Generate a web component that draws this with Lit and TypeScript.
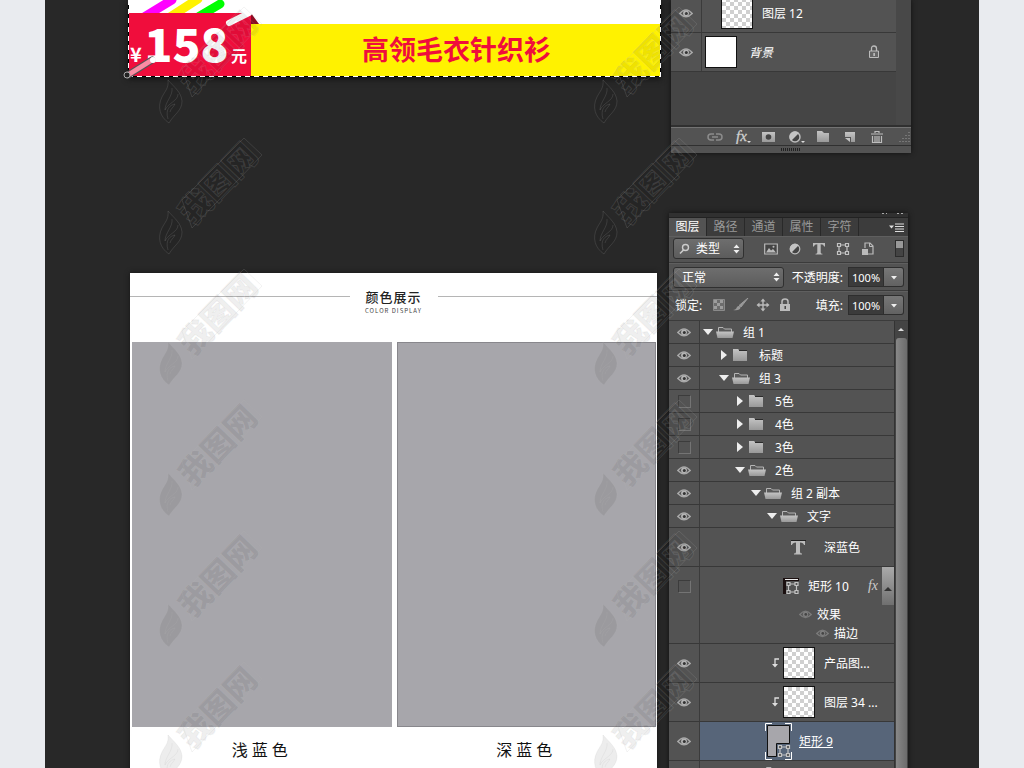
import { LitElement, html, svg, css, nothing } from "lit";
import { customElement, property } from "lit/decorators.js";

type Kind = "open" | "closed" | "text" | "shape" | "thumb" | "crop" | "white";
interface Layer {
  name: string;
  kind: Kind;
  depth: number;
  visible: boolean;
  tall?: boolean;
  clipped?: boolean;
  fx?: boolean;
  active?: boolean;
  locked?: boolean;
  background?: boolean;
}

const INDENT = 16;

const eye = svg`<path d="M.8 5.5Q7 -1.8 13.2 5.5Q7 12 .8 5.5Z" fill="#555" stroke="#a9a9a9" stroke-width="1.4"/><circle cx="7" cy="5.2" r="2.9" fill="#b4b4b4"/><circle cx="7.3" cy="5.4" r="1.5" fill="#333"/>`;
const lock = svg`<path d="M3 6V3.5Q3 1 6 1T9 3.5V6" fill="none" stroke="currentColor" stroke-width="1.5"/><path d="M1 6H11V13H1Z" fill="currentColor"/><path d="M5.5 8h1.4v3H5.5z" fill="#3c3c3c"/>`;
const lockOutline = svg`<path d="M3.500 6V3.500Q3.500 1 6 1T8.500 3.500V6" fill="none" stroke="#bbb" stroke-width="1.300"/><path d="M1.500 6H10.500V12.500H1.500Z" fill="#666" stroke="#bbb"/><path d="M5.500 8h1.200v3H5.500z" fill="#ddd"/>`;
const folderClosed = svg`<path d="M0 2V0H5L7 2H14V12H0Z" fill="url(#metal)"/><path d="M6 1.5H14" stroke="#2b2b2b"/>`;
const folderOpen = svg`<path d="M2.5 6V1.5H7L8.5 3H15.5V6" fill="#5a5a5a" stroke="#b5b5b5"/><path d="M0 5.5H18L16.5 12H1.5Z" fill="url(#metal)"/>`;
const metal = svg`<defs><linearGradient id="metal" x1="0" y1="0" x2="0" y2="1"><stop offset="0" stop-color="#c4c4c4"/><stop offset="1" stop-color="#999"/></linearGradient></defs>`;
const bounds = svg`<g fill="none" stroke="#c3c3c3" stroke-width="1.2"><path d="M4 3H10M4 11H10M3 4V10M11 4V10"/><path d="M1.5 1.5h3v3h-3zM9.5 1.5h3v3h-3zM1.5 9.5h3v3h-3zM9.5 9.5h3v3h-3z" fill="#555"/></g>`;
const glyphT = svg`<path d="M0 0H14V4H13Q12.500 1.500 9 1.500V11Q9 12.500 11 12.500V13.500H3V12.500Q5 12.500 5 11V1.500Q1.500 1.500 1 4H0Z" fill="#bcbcbc"/>`;

@customElement("layer-row")
export class LayerRow extends LitElement {
  @property({ attribute: false }) layer!: Layer;

  static styles = css`
    :host { display: block; }
    .row { display: grid; grid-template-columns: 31px 1fr; min-height: 22px; border-bottom: 1px solid #383838; background: #535353; color: #fff; }
    .tall { min-height: 38px; }
    .vis { display: grid; place-items: center; border-right: 1px solid #3b3b3b; }
    .vis > * { grid-area: 1 / 1; }
    .vis input { appearance: none; margin: 0; box-sizing: border-box; width: 13px; height: 13px; border: 1px solid; border-color: #3c3c3c #747474 #747474 #3c3c3c; }
    .vis input:checked { border-color: transparent; }
    .body { display: flex; align-items: center; min-width: 0; }
    .active { background: #576579; }
    .tri { width: 10px; height: 10px; margin: 0 3px; }
    .folder { width: 27px; height: 12px; }
    .kind { display: flex; justify-content: center; align-items: center; width: 32px; margin-right: 10px; }
    .shape { margin-right: 8px; }
    .clip { width: 8px; height: 10px; margin-right: 3px; }
    .thumb { box-sizing: border-box; width: 32px; height: 32px; border: 1px solid #111; background: #fff; margin-right: 9px; }
    .checker { background: repeating-conic-gradient(#cfcfcf 0 25%, #fff 0 50%) 0 0 / 8px 8px; }
    .crop { width: 27px; height: 37px; margin-right: 7px; }
    .name { flex: 1; white-space: nowrap; padding-top: 2px; font-size: 12px; line-height: 16px; }
    .active .name { text-decoration: underline; }
    .background { font-style: italic; margin-left: 3px; }
    .locked { width: 12px; height: 14px; margin-right: 16px; }
    .fx { font: italic 14px "Liberation Serif", serif; color: #ccc; margin-right: 4px; }
    .fold { align-self: stretch; width: 12px; border: 0; padding: 0; background: linear-gradient(#aaa, #707070); }
    .effects { display: grid; grid-column: 2; color: #fff; font-size: 12px; line-height: 19px; padding-left: 99px; }
    .effects div { display: flex; align-items: center; gap: 5px; }
    .effects div + div { padding-left: 17px; }
    .effects svg { opacity: 0.45; }
    .withfx { grid-template-rows: 38px 38px; background: linear-gradient(#3b3b3b, #3b3b3b) 30px 0 / 1px 100% no-repeat #535353; }
    .withfx .vis { border-right: 0; }
  `;

  private icon(l: Layer) {
    switch (l.kind) {
      case "open":
        return html`<svg class="tri" viewBox="0 0 10 10"><path d="M0 2H10L5 8Z" fill="#eee"/></svg>
          <svg class="folder" viewBox="0 0 27 12">${metal}${folderOpen}</svg>`;
      case "closed":
        return html`<svg class="tri" viewBox="0 0 10 10"><path d="M2 0V10L8 5Z" fill="#eee"/></svg>
          <svg class="folder" viewBox="-1 0 27 12">${metal}${folderClosed}</svg>`;
      case "text":
        return html`<span class="kind"><svg width="16" height="15" viewBox="-1 -1 16 15"><path d="M0 -.5H15" stroke="#222"/>${glyphT}</svg></span>`;
      case "shape":
        return html`<svg class="shape" width="17" height="17" viewBox="0 0 17 17"><path d="M0 0H16V3H3V16H0Z" fill="#1b1010"/><path d="M2 1.5H15" stroke="#eee"/><g transform="translate(2.500 3)">${bounds}</g></svg>`;
      case "crop":
        return html`<svg class="crop" viewBox="0 0 27 37"><path d="M.5 8V.5H7M20 .5H26.500V8M26.500 29V36.500H20M7 36.500H.5V29" fill="none" stroke="#fff"/><path d="M2.500 2.500H24.500V20.500H11.500V33.500H2.500Z" fill="#a7a6ab" stroke="#111"/><g transform="translate(12 21)">${bounds}</g></svg>`;
      case "thumb":
        return html`${l.clipped ? html`<svg class="clip" viewBox="0 0 8 10"><path d="M7 1H3V7" fill="none" stroke="#ddd" stroke-width="1.3"/><path d="M0 6H6L3 9.500Z" fill="#ddd"/></svg>` : nothing}<span class="thumb checker"></span>`;
      default:
        return html`<span class="thumb"></span>`;
    }
  }

  render() {
    const l = this.layer;
    const starts: Record<string, number> = { open: 0, closed: 0, text: 2, shape: 3, thumb: l.clipped ? -8 : 3, crop: 1, white: 3 };
    return html`<div class="row ${l.tall ? "tall" : ""} ${l.fx ? "withfx" : ""}">
      <label class="vis" aria-label=${l.name}>
        ${l.visible ? html`<svg width="14" height="11" viewBox="0 0 14 11">${eye}</svg>` : nothing}
        <input type="checkbox" .checked=${l.visible} />
      </label>
      <div class="body ${l.active ? "active" : ""}" style="padding-left:${l.depth * INDENT + starts[l.kind]}px">
        ${this.icon(l)}
        <span class="name ${l.background ? "background" : ""}">${l.name}</span>
        ${l.locked ? html`<svg class="locked" viewBox="0 0 12 14">${lockOutline}</svg>` : nothing}
        ${l.fx ? html`<span class="fx">fx</span><button class="fold" aria-label="折叠"><svg width="8" height="5" viewBox="0 0 8 5"><path d="M0 5H8L4 1Z" fill="#333"/></svg></button>` : nothing}
      </div>
      ${l.fx ? html`<div class="effects">
        <div><svg width="13" height="11" viewBox="0 0 14 11">${eye}</svg>效果</div>
        <div><svg width="13" height="11" viewBox="0 0 14 11">${eye}</svg>描边</div>
      </div>` : nothing}
    </div>`;
  }
}

const upper: Layer[] = [
  { name: "图层 12", kind: "thumb", depth: 1, visible: true, tall: true },
  { name: "背景", kind: "white", depth: 0, visible: true, tall: true, locked: true, background: true },
];

const lower: Layer[] = [
  { name: "组 1", kind: "open", depth: 0, visible: true },
  { name: "标题", kind: "closed", depth: 1, visible: true },
  { name: "组 3", kind: "open", depth: 1, visible: true },
  { name: "5色", kind: "closed", depth: 2, visible: false },
  { name: "4色", kind: "closed", depth: 2, visible: false },
  { name: "3色", kind: "closed", depth: 2, visible: false },
  { name: "2色", kind: "open", depth: 2, visible: true },
  { name: "组 2 副本", kind: "open", depth: 3, visible: true },
  { name: "文字", kind: "open", depth: 4, visible: true },
  { name: "深蓝色", kind: "text", depth: 5, visible: true, tall: true },
  { name: "矩形 10", kind: "shape", depth: 5, visible: false, tall: true, fx: true },
  { name: "产品图...", kind: "thumb", depth: 5, visible: true, tall: true, clipped: true },
  { name: "图层 34 ...", kind: "thumb", depth: 5, visible: true, tall: true, clipped: true },
  { name: "矩形 9", kind: "crop", depth: 4, visible: true, tall: true, active: true },
  { name: "", kind: "open", depth: 3, visible: true },
];

@customElement("layers-footer")
export class LayersFooter extends LitElement {
  static styles = css`
    :host { display: block; }
    .bar { display: flex; align-items: center; gap: 9px; height: 17px; padding-left: 35px; background: #535353; border-top: 1px solid #737373; border-bottom: 1px solid #303030; }
    button { display: grid; place-items: center; width: 18px; height: 17px; padding: 0; border: 0; background: none; color: #bbb; }
    .resize { margin-left: auto; }
    .grip { height: 7px; background: #535353; display: grid; place-items: center; }
  `;
  render() {
    const tool = (label: string, art: unknown) =>
      html`<button aria-label=${label}><svg width="18" height="14" viewBox="0 0 18 14">${metal}${art}</svg></button>`;
    return html`<div class="bar">
      ${tool("链接", svg`<g fill="none" stroke="#8c8c8c" stroke-width="1.500"><path d="M8 4H5Q2 4 2 7T5 10H8M10 4H13Q16 4 16 7T13 10H10M6 7H12"/></g>`)}
      ${tool("效果", svg`<text x="3" y="11" font-family="Liberation Serif, serif" font-style="italic" font-size="15" fill="#d0d0d0" stroke="#d0d0d0" stroke-width=".3">fx</text><path d="M14 11H18L16 13Z" fill="#ddd"/>`)}
      ${tool("蒙版", svg`<path d="M2 2H15V12H2Z" fill="url(#metal)"/><circle cx="8.500" cy="7" r="2.800" fill="#444"/>`)}
      ${tool("调整", svg`<circle cx="8" cy="7" r="5" fill="#444" stroke="#bbb" stroke-width="1.500"/><path d="M4 11A5.500 5.500 0 0 1 12 3Z" fill="#c4c4c4"/><path d="M14 11H18L16 13Z" fill="#ddd"/>`)}
      ${tool("新建组", svg`<path d="M3 3V1H8L10 3H15V12H3Z" fill="url(#metal)"/>`)}
      ${tool("新建图层", svg`<path d="M4 2H14V12H10V7H4Z" fill="url(#metal)"/><path d="M4 8H9V12Z" fill="#c4c4c4"/>`)}
      ${tool("删除", svg`<g fill="none" stroke="#bdbdbd" stroke-width="1.200"><path d="M3 4H15M7 3V1.500H11V3M4.500 6V12.500H13.500V6M7 6V12M9 6V12M11 6V12"/></g>`)}
      <svg class="resize" width="12" height="12" viewBox="0 0 12 12"><path d="M10 1V11M7 4V11M4 7V11M1 10V11" stroke="#999" stroke-dasharray="1 2"/></svg>
    </div>
    <div class="grip"><svg width="20" height="3" viewBox="0 0 20 3"><path d="M0 1.500H20" stroke="#222" stroke-width="3" stroke-dasharray="1 1"/></svg></div>`;
  }
}

@customElement("layers-controls")
export class LayersControls extends LitElement {
  static styles = css`
    :host { display: block; font-size: 12px; color: #fff; }
    .strip { height: 4px; border-bottom: 1px solid #222; background: #303030; display: flex; justify-content: flex-end; }
    .tabs { display: flex; height: 18px; background: #3c3c3c; }
    .tabs button { width: 38px; padding: 0; border: 0; border-right: 1px solid #292929; background: none; color: #999; font: inherit; line-height: 18px; }
    .tabs .on { background: #535353; color: #fff; }
    .tabs .menu { margin-left: auto; border: 0; width: 24px; display: grid; place-items: center; }
    .line { display: flex; align-items: center; box-sizing: border-box; height: 28px; padding: 0 4px; background: #535353; border-bottom: 1px solid #3b3b3b; border-top: 1px solid #5f5f5f; white-space: nowrap; }
    .filter { height: 27px; padding-bottom: 2px; }
    .locking { height: 30px; padding-bottom: 2px; }
    .pick { position: relative; display: flex; align-items: center; }
    .pick svg { pointer-events: none; position: absolute; }
    .search { left: 6px; }
    .spin { right: 4px; }
    select { appearance: none; box-sizing: border-box; height: 21px; margin: 0; border: 1px solid #303030; border-radius: 3px; background: linear-gradient(#6e6e6e, #5c5c5c); color: #fff; font: inherit; padding: 0 8px; }
    .kind { width: 71px; padding-left: 22px; }
    .blend { width: 111px; }
    .filters { display: flex; align-items: center; gap: 8px; margin-left: 19px; }
    .filters button, .locks button { display: grid; place-items: center; width: 16px; height: 16px; padding: 0; border: 0; background: none; }
    .switch { margin-left: auto; width: 9px; height: 17px; box-sizing: border-box; border: 1px solid #2c2c2c; background: linear-gradient(#999 0 7px, #444 7px); }
    .value { display: flex; align-items: center; gap: 5px; margin-left: auto; }
    .field { display: flex; }
    .field input { box-sizing: border-box; width: 36px; height: 20px; padding: 0 0 0 3px; border: 1px solid #2e2e2e; background: #3b3b3b; color: #fff; font: inherit; font-size: 11px; }
    .field button { width: 20px; height: 20px; display: grid; place-items: center; padding: 0; border: 1px solid #2e2e2e; border-left: 0; border-radius: 0 3px 3px 0; background: linear-gradient(#777, #626262); }
    .locks { display: flex; align-items: center; gap: 6px; margin-left: 9px; }
    .title { margin-left: 2px; }
  `;
  render() {
    const spin = html`<svg class="spin" width="7" height="10" viewBox="0 0 7 10"><path d="M.5 4H6.500L3.500 .5ZM.5 6H6.500L3.500 9.500Z" fill="#eee"/></svg>`;
    const field = (id: string, label: string) => html`<div class="value"><label for=${id}>${label}:</label><span class="field"><input id=${id} type="text" value="100%" /><button aria-label=${label}><svg width="8" height="5" viewBox="0 0 8 5"><path d="M1 1H7L4 4.500Z" fill="#eee"/></svg></button></span></div>`;
    return html`<div class="strip"><svg width="28" height="2" viewBox="0 0 28 2"><path d="M2 .5H7M17 .5H23" stroke="#aaa" stroke-dasharray="2 2"/></svg></div>
    <div class="tabs">
      ${["图层", "路径", "通道", "属性", "字符"].map((t, i) => html`<button class=${i ? "" : "on"}>${t}</button>`)}
      <button class="menu" aria-label="菜单"><svg width="15" height="9" viewBox="0 0 15 9"><path d="M0 2.500H5L2.500 5.500Z" fill="#ddd"/><path d="M6 1H15M6 3.500H15M6 6H15M6 8.500H15" stroke="#ddd"/></svg></button>
    </div>
    <div class="line filter">
      <span class="pick"><svg class="search" width="11" height="12" viewBox="0 0 11 12"><circle cx="6.500" cy="4.500" r="3" fill="none" stroke="#ccc" stroke-width="1.400"/><path d="M4.500 7L1 10.500" stroke="#ccc" stroke-width="1.600"/></svg><select class="kind" aria-label="筛选"><option>类型</option></select>${spin}</span>
      <span class="filters">
        <button aria-label="像素"><svg width="14" height="12" viewBox="0 0 14 12"><path d="M.7 1H13.300V11H.7Z" fill="#444" stroke="#bbb" stroke-width="1.200"/><path d="M2 9.500L5 5L7 7.500L9 6L12 9.500Z" fill="#bbb"/><circle cx="9.500" cy="3.800" r="1" fill="#bbb"/></svg></button>
        <button aria-label="调整"><svg width="12" height="12" viewBox="0 0 12 12"><circle cx="6" cy="6" r="4.800" fill="#444" stroke="#bbb" stroke-width="1.200"/><path d="M2.300 9.700A5.200 5.200 0 0 1 9.700 2.300Z" fill="#c4c4c4"/></svg></button>
        <button aria-label="文字"><svg width="12" height="12" viewBox="0 0 14 14">${glyphT}</svg></button>
        <button aria-label="形状"><svg width="14" height="14" viewBox="0 0 14 14">${bounds}</svg></button>
        <button aria-label="智能对象"><svg width="13" height="14" viewBox="0 0 13 14"><path d="M4 6V1H9L12 4V12H7" fill="none" stroke="#bbb" stroke-width="1.200"/><path d="M8.500 1V4.500H12" fill="none" stroke="#bbb"/><path d="M1 7H7V13H1Z" fill="#bbb"/></svg></button>
      </span>
      <span class="switch"></span>
    </div>
    <div class="line">
      <span class="pick"><select class="blend" aria-label="混合模式"><option>正常</option></select>${spin}</span>
      ${field("opacity", "不透明度")}
    </div>
    <div class="line locking">
      <span class="title">锁定:</span>
      <span class="locks">
        <button aria-label="透明像素"><svg width="12" height="12" viewBox="0 0 12 12"><path d="M.5 .5H11.500V11.500H.5Z" fill="#6d6d6d" stroke="#8a8a8a"/><path d="M1 1H4V4H1ZM7 1H10V4H7ZM4 4H7V7H4ZM1 7H4V10H1ZM7 7H10V10H7Z" fill="#9d9d9d"/></svg></button>
        <button aria-label="图像像素"><svg width="16" height="14" viewBox="0 0 16 14"><path d="M15 0L8 9L6 7.500Z" fill="#999" stroke="#999"/><path d="M0 12Q3 12 4 9Q6 7 7.500 9.500Q7 13 0 12Z" fill="#999"/></svg></button>
        <button aria-label="位置"><svg width="14" height="14" viewBox="0 0 14 14"><path d="M7 2V12M2 7H12" stroke="#bbb" stroke-width="1.400"/><path d="M4.500 3.500L7 .5L9.500 3.500ZM4.500 10.500L7 13.500L9.500 10.500ZM3.500 4.500L.5 7L3.500 9.500ZM10.500 4.500L13.500 7L10.500 9.500Z" fill="#bbb"/></svg></button>
        <button aria-label="全部"><svg width="12" height="14" viewBox="0 0 12 14" color="#bbb">${lock}</svg></button>
      </span>
      ${field("fill", "填充")}
    </div>`;
  }
}

@customElement("app-root")
export class AppRoot extends LitElement {
  static styles = css`
    :host { display: block; height: 100vh; overflow: hidden; background: #e9ebef; font-family: "Noto Sans", "Noto Sans CJK SC", sans-serif; }
    main { position: relative; box-sizing: border-box; min-height: 100%; margin: 0 45px; padding: 0 68px 0 83px; background: #282828; }
    .pair { display: grid; grid-template-columns: 1fr 240px; column-gap: 10px; align-items: start; }
    .pair + .pair { margin-top: 60px; }
    .panel { box-shadow: 0 0 5px #111; }
    .upper .layers { display: grid; grid-template-columns: 1fr 15px; background: #484848; border-bottom: 2px solid #303030; }
    .upper .list { margin-top: -6px; padding-bottom: 53px; background: #454545; }
    .lower { margin: 0 3px 0 -2px; background: #535353; }
    .lower .layers { display: grid; grid-template-columns: 1fr 14px; }
    .scroll { background: #444; border-left: 1px solid #333; display: flex; flex-direction: column; align-items: center; }
    .scroll svg { margin: 6px 0; }
    .handle { flex: 1; width: 11px; border-radius: 3px; background: linear-gradient(90deg, #888, #6c6c6c); }

    .poster { position: relative; background: #fff; padding: 24px 1px 1px; box-shadow: 0 2px 6px #111; }
    .banner { display: flex; box-sizing: border-box; margin-left: 122px; height: 52px; padding-bottom: 2px; align-items: center; background: #fff200; }
    h1 { margin: 0 0 0 111px; font: 700 27px/40px "Noto Sans CJK SC", sans-serif; color: #f00d3c; white-space: nowrap; }
    .price { position: absolute; left: 0; bottom: 1px; width: 123px; height: 63px; box-sizing: border-box; padding: 0 4px 0 2px; display: flex; align-items: baseline; justify-content: space-between; background: #f00d3c; color: #fff; font: 700 16px/58px "Noto Sans CJK SC", sans-serif; }
    .price .yen { font-size: 20px; }
    .price b { font-size: 46px; }
    .strokes { position: absolute; left: -6px; bottom: -4px; }
    .ants { position: absolute; inset: 0; background:
      repeating-linear-gradient(90deg, #fff 0 5px, #000 5px 9px) bottom / 100% 1px no-repeat,
      repeating-linear-gradient(#fff 0 5px, #000 5px 9px) left / 1px 100% no-repeat,
      repeating-linear-gradient(#fff 0 5px, #000 5px 9px) right / 1px 100% no-repeat; }

    .sheet { margin: 60px 4px 0 2px; background: #fff; color: #222; font-family: "Noto Sans CJK SC", sans-serif; box-shadow: 0 0 5px #151515; }
    header { display: grid; grid-template-columns: 1fr 88px 1fr; padding-top: 14px; height: 55px; }
    header hr { width: 100%; height: 1px; margin: 9px 0; border: 0; background: #b5b5b5; }
    h2 { margin: 0; font-size: 13px; line-height: 20px; font-weight: 500; letter-spacing: 1px; text-align: center; }
    header p { margin: 0; font: 6px/8px "Noto Sans CJK SC", sans-serif; letter-spacing: 1px; text-align: center; white-space: nowrap; color: #444; }
    .swatches { display: grid; grid-template-columns: 1fr 1fr; gap: 5px; padding: 0 1px 0 2px; }
    figure { margin: 0; }
    .swatch { height: 385px; background: #a7a6ab; }
    .swatch.edge { outline: 1px solid #88878c; outline-offset: -1px; }
    figcaption { padding: 8px 0 40px; text-align: center; font-size: 16px; line-height: 28px; letter-spacing: 4px; color: #111; }

    .marks { position: absolute; left: 105px; top: -1px; pointer-events: none; display: grid; grid-template-columns: 435px 120px; grid-auto-rows: 131px; }
    .marks svg { overflow: visible; font: 900 32px "Noto Sans CJK SC", sans-serif; fill: rgba(0, 0, 0, 0.07); stroke: rgba(180, 180, 180, 0.16); }
  `;

  render() {
    const mark = html`<svg width="120" height="131" viewBox="0 0 120 131" aria-hidden="true">
      <path d="M18 81C25 89 31 93 32 102C32 112 24 115 19 124C10 118 7 108 12 98C15 92 19 89 18 81Z"/>
      <path d="M22 89C23 97 15 103 15 111C18 104 28 102 28 95M18 120C15 110 20 106 25 105C23 109 21 109 20 113" fill="none"/>
      <text x="0" y="0" transform="translate(43 96) rotate(-46)">我图网</text>
      <path d="M32 70L94 8L112 25L42 98Z" fill="none"/></svg>`;
    return html`<main>
      <section class="pair">
        <article class="poster">
          <div class="banner"><h1>高领毛衣针织衫</h1></div>
          <div class="price"><span class="yen">¥</span><b>158</b><span>元</span></div>
          <div class="ants"></div>
          <svg class="strokes" width="140" height="81" viewBox="0 0 140 81">
            <g stroke-linecap="round" stroke-width="9">
              <path d="M22 17L50 0" stroke="#f0f"/><path d="M48 17L76 -1" stroke="#fff200"/><path d="M76 17L98 4" stroke="#0f0"/>
            </g>
            <path d="M7 13H129V24H7Z" fill="#f00d3c"/>
            <path d="M129 13L137 24H129Z" fill="#8c0b22"/>
            <path d="M107 23L127 13" stroke="#fff" stroke-width="6" stroke-linecap="round"/>
            <path d="M6 75L30 60" stroke="#555" stroke-width="7" stroke-linecap="round"/>
            <path d="M6 75L30 60" stroke="#fb8ba3" stroke-width="5" stroke-linecap="round"/>
            <circle cx="31" cy="60" r="3" fill="#fff"/><circle cx="5" cy="75" r="3" fill="#222" stroke="#aaa"/>
          </svg>
        </article>
        <aside class="panel upper">
          <div class="layers"><div class="list">${upper.map((l) => html`<layer-row .layer=${l}></layer-row>`)}</div></div>
          <layers-footer></layers-footer>
        </aside>
      </section>
      <section class="pair">
        <article class="sheet">
          <header><hr /><div><h2>颜色展示</h2><p>COLOR DISPLAY</p></div><hr /></header>
          <div class="swatches">
            <figure><div class="swatch"></div><figcaption>浅蓝色</figcaption></figure>
            <figure><div class="swatch edge"></div><figcaption>深蓝色</figcaption></figure>
          </div>
        </article>
        <aside class="panel lower">
          <layers-controls></layers-controls>
          <div class="layers">
            <div>${lower.map((l) => html`<layer-row .layer=${l}></layer-row>`)}</div>
            <div class="scroll"><svg width="7" height="5" viewBox="0 0 7 5"><path d="M0 4H6L3 1Z" fill="#ddd"/></svg><div class="handle"></div></div>
          </div>
        </aside>
      </section>
      <div class="marks">${Array.from({ length: 12 }, () => mark)}</div>
    </main>`;
  }
}
